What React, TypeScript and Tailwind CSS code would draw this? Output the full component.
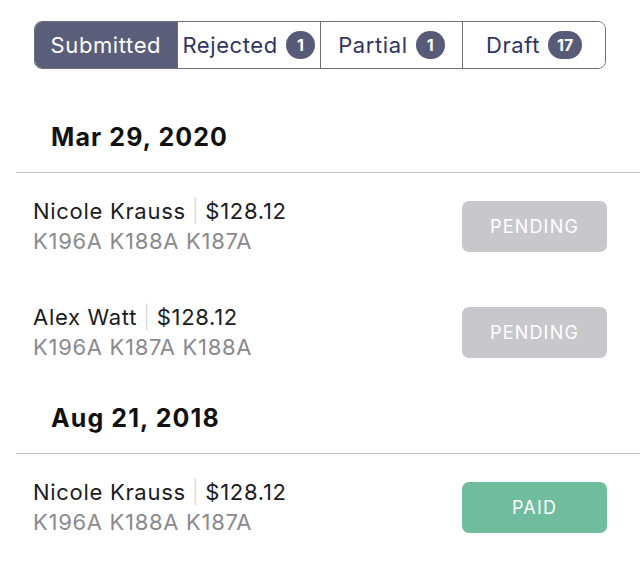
import React from 'react';

type Claim = {
  name: string;
  amount: string;
  codes: string;
  status: 'PENDING' | 'PAID';
};

const groups: { date: string; claims: Claim[] }[] = [
  {
    date: 'Mar 29, 2020',
    claims: [
      { name: 'Nicole Krauss', amount: '$128.12', codes: 'K196A K188A K187A', status: 'PENDING' },
      { name: 'Alex Watt', amount: '$128.12', codes: 'K196A K187A K188A', status: 'PENDING' },
    ],
  },
  {
    date: 'Aug 21, 2018',
    claims: [{ name: 'Nicole Krauss', amount: '$128.12', codes: 'K196A K188A K187A', status: 'PAID' }],
  },
];

const tabs = [
  { label: 'Submitted', count: 0 },
  { label: 'Rejected', count: 1 },
  { label: 'Partial', count: 1 },
  { label: 'Draft', count: 17 },
];

const App = () => {
  return (
    <div className="min-h-screen bg-white font-['Inter','Liberation_Sans',sans-serif]">
      {/* Segmented control */}
      <div className="pt-[21px] px-[34px]">
        <div className="flex h-[48px] rounded-[8px] border border-[#6b6d78] overflow-hidden">
          {tabs.map((tab, i) => {
            const active = i === 0;
            return (
              <div
                key={tab.label}
                className={`flex-1 flex items-center justify-center gap-[8px] text-[22px] tracking-[0.6px] ${
                  i > 0 ? 'border-l border-[#6b6d78]' : ''
                } ${active ? 'bg-[#5a5e7b] text-white' : 'bg-white text-[#2f3560]'}`}
              >
                <span>{tab.label}</span>
                {tab.count > 0 && (
                  <span className="h-[28px] min-w-[29px] px-[9px] rounded-full bg-[#575b78] text-white text-[16px] tracking-normal font-bold flex items-center justify-center">
                    {tab.count}
                  </span>
                )}
              </div>
            );
          })}
        </div>
      </div>

      {/* Claim groups */}
      <div className="pt-[35px]">
        {groups.map((group) => (
          <div key={group.date}>
            <div className="ml-4 h-[69px] flex items-center pl-[35px] border-b border-[#c4c4c6]">
              <h2 className="text-[25px] tracking-[1.1px] font-bold text-[#111111]">{group.date}</h2>
            </div>
            {group.claims.map((claim, idx) => (
              <div key={idx} className="h-[106px] flex items-center justify-between pl-[33px] pr-[33px]">
                <div className="flex flex-col text-[22px] leading-[30px] tracking-[0.7px]">
                  <div className="text-[#1c1c1e]">
                    {claim.name}
                    <span className="text-[#d8d8dc] font-light mx-[6px]">|</span>
                    {claim.amount}
                  </div>
                  <div className="text-[#8a8a8e]">{claim.codes}</div>
                </div>
                <div
                  className={`w-[145px] h-[51px] rounded-[7px] flex items-center justify-center text-white text-[18px] tracking-[1.2px] ${
                    claim.status === 'PAID' ? 'bg-[#6fbc9f]' : 'bg-[#c7c7cc]'
                  }`}
                >
                  {claim.status}
                </div>
              </div>
            ))}
          </div>
        ))}
      </div>
    </div>
  );
};

export default App;
